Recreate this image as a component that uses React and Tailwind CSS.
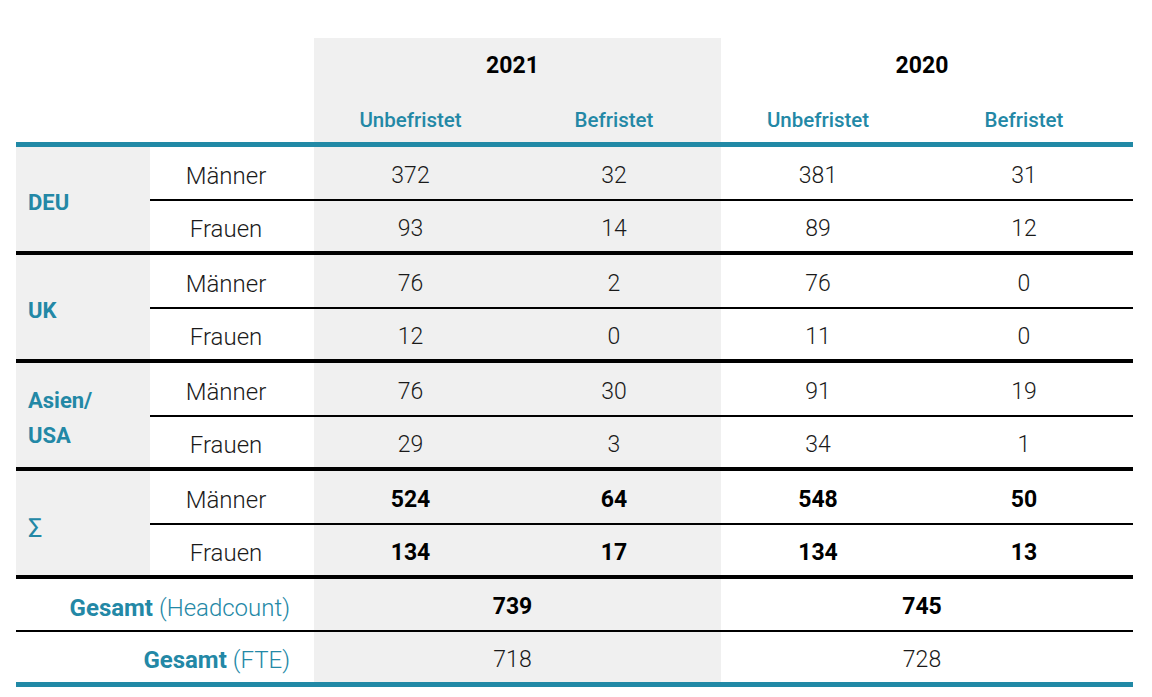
const teal = "text-[#2388a6]";

const groups = [
  { label: "DEU", rows: [["Männer", "372", "32", "381", "31"], ["Frauen", "93", "14", "89", "12"]] },
  { label: "UK", rows: [["Männer", "76", "2", "76", "0"], ["Frauen", "12", "0", "11", "0"]] },
  { label: "Asien/\nUSA", rows: [["Männer", "76", "30", "91", "19"], ["Frauen", "29", "3", "34", "1"]] },
  { label: "∑", sum: true, rows: [["Männer", "524", "64", "548", "50"], ["Frauen", "134", "17", "134", "13"]] },
];

function DataRow({ row, bold, h }) {
  const num = bold ? "font-bold text-black" : "font-light text-[#1a1a1a]";
  return (
    <div className={`flex ${h}`}>
      <div className="w-[164px] flex items-center justify-center pr-3 pt-[6px] font-light text-[24px] text-[#1a1a1a]">
        {row[0]}
      </div>
      <div className={`w-[203px] bg-[#f0f0f0] flex items-center justify-center pr-[10px] pt-[6px] ${num}`}>{row[1]}</div>
      <div className={`w-[204px] bg-[#f0f0f0] flex items-center justify-center pr-[10px] pt-[6px] ${num}`}>{row[2]}</div>
      <div className={`w-[204px] flex items-center justify-center pr-[10px] pt-[6px] ${num}`}>{row[3]}</div>
      <div className={`flex-1 flex items-center justify-center pr-[10px] pt-[6px] ${num}`}>{row[4]}</div>
    </div>
  );
}

export default function App() {
  return (
    <div
      className="bg-white w-[1152px] h-[697px] pt-[38px] pl-4"
      style={{ fontFamily: "Roboto, 'Open Sans', sans-serif" }}
    >
      <div className="w-[1117px] text-[23px]">
        {/* header */}
        <div className="flex">
          <div className="w-[298px]" />
          <div className="w-[407px] bg-[#f0f0f0]">
            <div className="h-[54px] flex items-center justify-center pr-[10px] pt-[2px] font-bold text-[23px] text-black">2021</div>
            <div className={`h-[50px] flex pt-[6px] text-[20.5px] font-medium ${teal}`}>
              <div className="w-[203px] flex items-center justify-center pr-[10px]">Unbefristet</div>
              <div className="flex-1 flex items-center justify-center pr-[10px]">Befristet</div>
            </div>
          </div>
          <div className="flex-1">
            <div className="h-[54px] flex items-center justify-center pr-[10px] pt-[2px] font-bold text-[23px] text-black">2020</div>
            <div className={`h-[50px] flex pt-[6px] text-[20.5px] font-medium ${teal}`}>
              <div className="w-[204px] flex items-center justify-center pr-[10px]">Unbefristet</div>
              <div className="flex-1 flex items-center justify-center pr-[10px]">Befristet</div>
            </div>
          </div>
        </div>
        <div className="h-[5px] bg-[#2189a6]" />

        {groups.map((g) => (
          <div key={g.label}>
            <div className="flex">
              <div className={`w-[134px] bg-[#f0f0f0] flex items-center pl-3 pt-[6px] font-bold text-[22px] leading-[35px] whitespace-pre-line ${teal}`}>
                {g.sum ? <span className="font-medium text-[22px]">∑</span> : g.label}
              </div>
              <div className="flex-1 flex flex-col">
                <DataRow row={g.rows[0]} bold={g.sum} h="h-[52px]" />
                <div className="h-[2px] bg-black" />
                <DataRow row={g.rows[1]} bold={g.sum} h="h-[50px]" />
              </div>
            </div>
            <div className="h-[4px] bg-black" />
          </div>
        ))}

        {/* totals */}
        <div className="flex h-[51px]">
          <div className={`w-[298px] flex items-center justify-end pr-6 pt-[6px] text-[24px] ${teal}`}>
            <span className="font-bold">Gesamt</span>
            <span className="font-light ml-[6px]">(Headcount)</span>
          </div>
          <div className="w-[407px] bg-[#f0f0f0] flex items-center justify-center pr-[10px] pt-[6px] font-bold text-black">739</div>
          <div className="flex-1 flex items-center justify-center pr-[10px] pt-[6px] font-bold text-black">745</div>
        </div>
        <div className="h-[2px] bg-black" />
        <div className="flex h-[50px]">
          <div className={`w-[298px] flex items-center justify-end pr-6 pt-[6px] text-[24px] ${teal}`}>
            <span className="font-bold">Gesamt</span>
            <span className="font-light ml-[6px]">(FTE)</span>
          </div>
          <div className="w-[407px] bg-[#f0f0f0] flex items-center justify-center pr-[10px] pt-[6px] font-light text-[#1a1a1a]">718</div>
          <div className="flex-1 flex items-center justify-center pr-[10px] pt-[6px] font-light text-[#1a1a1a]">728</div>
        </div>
        <div className="h-[5px] bg-[#2189a6]" />
      </div>
    </div>
  );
}
